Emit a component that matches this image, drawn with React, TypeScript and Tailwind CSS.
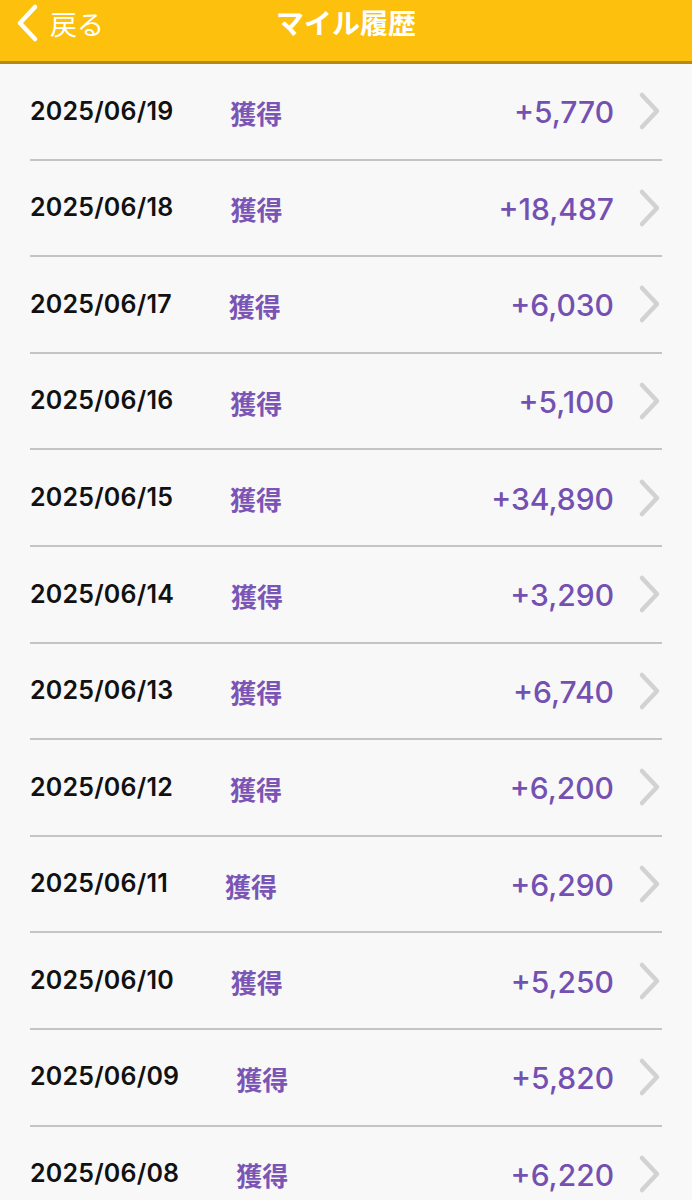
import React from "react";

interface MileEntry {
  date: string;
  label: string;
  amount: string;
}

const entries: MileEntry[] = [
  { date: "2025/06/19", label: "獲得", amount: "+5,770" },
  { date: "2025/06/18", label: "獲得", amount: "+18,487" },
  { date: "2025/06/17", label: "獲得", amount: "+6,030" },
  { date: "2025/06/16", label: "獲得", amount: "+5,100" },
  { date: "2025/06/15", label: "獲得", amount: "+34,890" },
  { date: "2025/06/14", label: "獲得", amount: "+3,290" },
  { date: "2025/06/13", label: "獲得", amount: "+6,740" },
  { date: "2025/06/12", label: "獲得", amount: "+6,200" },
  { date: "2025/06/11", label: "獲得", amount: "+6,290" },
  { date: "2025/06/10", label: "獲得", amount: "+5,250" },
  { date: "2025/06/09", label: "獲得", amount: "+5,820" },
  { date: "2025/06/08", label: "獲得", amount: "+6,220" },
];

function Chevron({ className, color }: { className?: string; color: string }) {
  return (
    <svg className={className} viewBox="0 0 24 40" fill="none">
      <path d="M4 4 L19 20 L4 36" stroke={color} strokeWidth="4.5" strokeLinecap="round" strokeLinejoin="round" />
    </svg>
  );
}

export default function App() {
  const jp = { fontFamily: '"Noto Sans CJK JP", "Noto Sans", sans-serif' };
  const num = { fontFamily: 'Inter, "Noto Sans CJK JP", sans-serif' };

  return (
    <div className="w-[692px] h-[1200px] overflow-hidden bg-[#f8f8f8]">
      <header className="relative h-[64px] bg-[#fdc00c] border-b-[3px] border-[#b98a12]">
        <div className="absolute left-[13px] top-[3px] flex items-center">
          <Chevron className="w-[28px] h-[40px] rotate-180" color="#ffffff" />
          <span className="ml-[9px] text-[27px] leading-none text-white" style={jp}>
            戻る
          </span>
        </div>
        <h1 className="pt-[5px] text-center text-[28px] font-bold leading-[34px] text-white" style={jp}>
          マイル履歴
        </h1>
      </header>

      <ul>
        {entries.map((e) => (
          <li key={e.date} className="ml-[30px] mr-[30px] h-[96.6px] border-b-2 border-[#c4c4c4] flex items-center">
            <span className="text-[25px] font-semibold text-[#111111] tracking-[0.2px]" style={num}>
              {e.date}
            </span>
            <span className="ml-[57px] mt-[2px] text-[26px] font-bold text-[#7b55b6]" style={jp}>
              {e.label}
            </span>
            <span className="ml-auto mt-[3px] text-[30px] font-medium text-[#7450b2]" style={num}>
              {e.amount}
            </span>
            <Chevron className="ml-[24px] w-[24px] h-[40px]" color="#d2d2d2" />
          </li>
        ))}
      </ul>
    </div>
  );
}
